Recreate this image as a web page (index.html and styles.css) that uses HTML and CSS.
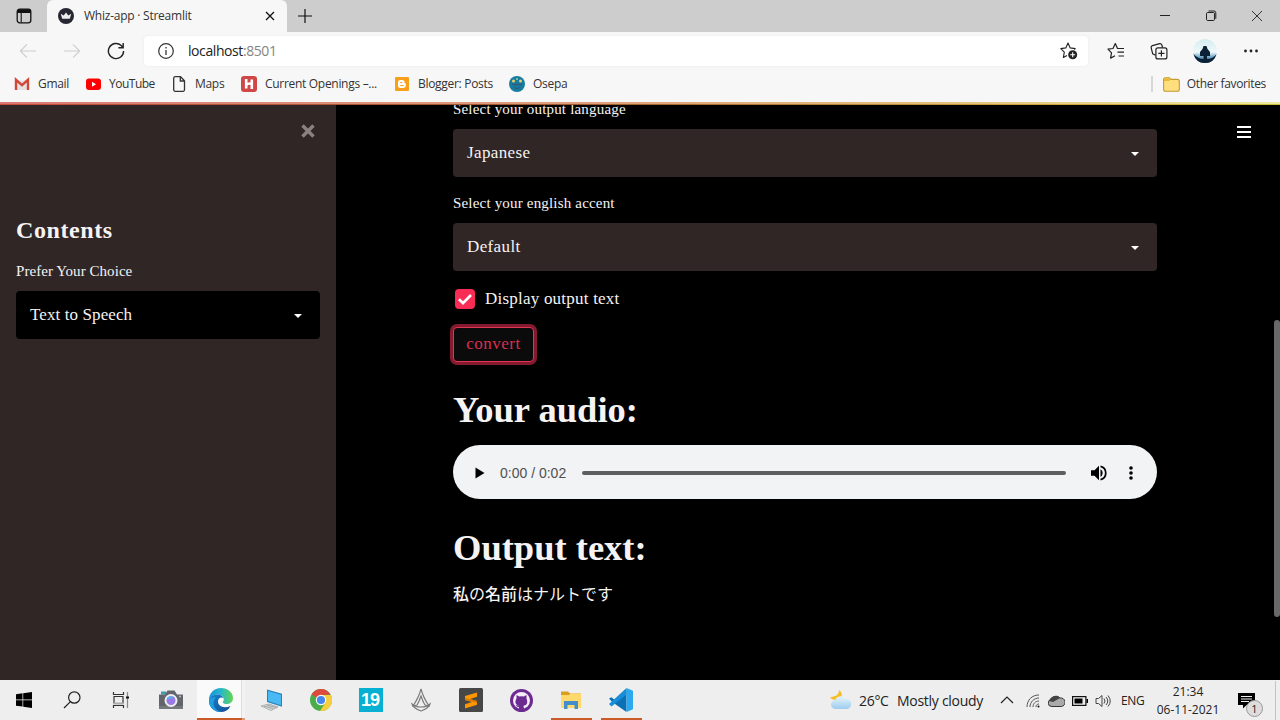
FILE: index.html
```html
<!DOCTYPE html>
<html lang="en">
<head>
<meta charset="utf-8">
<title>Whiz-app · Streamlit</title>
<link rel="stylesheet" href="styles.css">
</head>
<body>
<div class="window">
  <header class="titlebar">
    <div class="tab-actions"><svg width="16" height="16" viewBox="0 0 16 16"><rect x="1.200" y="1.200" width="13.600" height="13.600" rx="2.500" fill="none" stroke="#111" stroke-width="1.300"/><path d="M1.200 5V3.500a2.300 2.300 0 0 1 2.300-2.300h9a2.300 2.300 0 0 1 2.300 2.300V5z" fill="#111"/><path d="M5.200 5v9.500" stroke="#111" stroke-width="1.100"/></svg></div>
    <div class="tab">
      <svg width="16" height="16" viewBox="0 0 16 16"><circle cx="8" cy="8" r="8" fill="#262730"/><path d="M2.800 5.700 5.700 7.400 8 4.500l2.300 2.900 2.900-1.700-1.400 5.100H4.200z" fill="#eee"/></svg>
      <span class="tab-title">Whiz-app · Streamlit</span>
      <svg width="10" height="10" viewBox="0 0 10 10"><path d="M1 1l8 8M9 1 1 9" stroke="#111" stroke-width="1.300"/></svg>
    </div>
    <div class="new-tab"><svg width="14" height="14" viewBox="0 0 14 14"><path d="M7 0v14M0 7h14" stroke="#111" stroke-width="1.200"/></svg></div>
    <div class="window-controls">
      <svg width="12" height="12" viewBox="0 0 12 12"><path d="M1 5.500h10" stroke="#222"/></svg>
      <svg width="12" height="12" viewBox="0 0 12 12" fill="none" stroke="#222"><rect x="1.500" y="2.500" width="8" height="8" rx="1.200"/><path d="M3.500 1H9a1.800 1.800 0 0 1 1.800 1.800v6"/></svg>
      <svg width="12" height="12" viewBox="0 0 12 12"><path d="M1 1l10 10M11 1 1 11" stroke="#333"/></svg>
    </div>
  </header>

  <div class="toolbar">
    <div class="nav">
      <svg width="18" height="16" viewBox="0 0 18 16" fill="none" stroke="#cdcdcd" stroke-width="1.100"><path d="M17 8H1.500M8 1.300 1.300 8 8 14.700"/></svg>
      <svg width="18" height="16" viewBox="0 0 18 16" fill="none" stroke="#cdcdcd" stroke-width="1.100"><path d="M1 8h15.500M10 1.300 16.700 8 10 14.700"/></svg>
      <svg width="18" height="18" viewBox="0 0 18 18" fill="none" stroke="#222" stroke-width="1.400"><path d="M16.600 9a7.600 7.600 0 1 1-2.400-5.500L16 5.500M16.200 1v4.800h-4.800"/></svg>
    </div>
    <div class="address">
      <svg width="16" height="16" viewBox="0 0 16 16"><circle cx="8" cy="8" r="7.300" fill="none" stroke="#333" stroke-width="1.200"/><path d="M8 7v5M8 4v1.500" stroke="#333" stroke-width="1.300"/></svg>
      <span class="url">localhost<span class="port">:8501</span></span>
      <svg width="18" height="18" viewBox="0 0 18 18"><path d="M7 13.600 3.400 15.400l.9-5.200L.8 6.600l5-.7L8 1l2.200 4.900 5 .7-1 1" fill="none" stroke="#222" stroke-width="1.100" stroke-linejoin="round"/><circle cx="12.700" cy="12.800" r="4.500" fill="#222"/><path d="M12.700 10.300v5M10.200 12.800h5" stroke="#fff" stroke-width="1.100"/></svg>
    </div>
    <div class="tools">
      <svg width="18" height="18" viewBox="0 0 18 18" fill="none" stroke="#222" stroke-width="1.200" stroke-linejoin="round"><path d="M12.500 6.500h-2L8.300 1.600 6 6.500l-5 .7 3.500 3.600-.9 5.300L8 13.700M11.500 6.500H17M10.500 10.200H17M11.500 14H17"/></svg>
      <svg width="18" height="18" viewBox="0 0 18 18" fill="none" stroke="#222" stroke-width="1.200"><path d="M12.500 5.500l-.6-2.500a1.800 1.800 0 0 0-2.200-1.300L2.500 3.600A1.800 1.800 0 0 0 1.200 5.800l1.500 6 2.800 1.500"/><rect x="5.900" y="5.900" width="11" height="11" rx="2"/><path d="M11.400 8.300v6.200M8.300 11.400h6.200"/></svg>
      <svg width="24" height="24" viewBox="0 0 24 24"><defs><linearGradient id="sky" x1="0" y1="0" x2="0" y2="1"><stop offset="0" stop-color="#d5edef"/><stop offset=".55" stop-color="#eef8fa"/><stop offset=".75" stop-color="#6fa6c4"/><stop offset="1" stop-color="#163b5c"/></linearGradient></defs><circle cx="12" cy="12" r="12" fill="url(#sky)"/><path d="M.5 15q4.500 5 10 5v-3H7v-4l2.500-3 1-3h3l1 3 2.500 3v4h-3v3q6 0 9.500-5Q21 24 12 24 3 24 .5 15z" fill="#0b2136"/></svg>
      <svg width="16" height="4" viewBox="0 0 16 4" fill="#222"><circle cx="3.500" cy="2" r="1.400"/><circle cx="9" cy="2" r="1.400"/><circle cx="14.500" cy="2" r="1.400"/></svg>
    </div>
  </div>

  <nav class="bookmarks">
    <div class="links">
      <a class="bookmark"><svg width="16" height="16" viewBox="0 0 16 16"><path d="M3 4.500h10V14H3z" fill="#e5e2e2"/><path d="M2 14V3.800l6 5.400 6-5.400V14" fill="none" stroke="#d14836" stroke-width="2.400"/></svg><span>Gmail</span></a>
      <a class="bookmark"><svg width="16" height="16" viewBox="0 0 16 16"><rect x="1" y="2.500" width="15" height="11.500" rx="3" fill="#f00"/><path d="M7 5.700v5l4-2.500z" fill="#fff"/></svg><span class="tight">YouTube</span></a>
      <a class="bookmark"><svg width="16" height="16" viewBox="0 0 16 16" fill="none" stroke="#333" stroke-width="1.300"><path d="M2.700 2.200a1.500 1.500 0 0 1 1.300-1.500h5.500l4 4v9.100a1.500 1.500 0 0 1-1.500 1.500H4.200a1.500 1.500 0 0 1-1.500-1.500zM9.300.8V5h4.200"/></svg><span>Maps</span></a>
      <a class="bookmark"><svg width="16" height="16" viewBox="0 0 16 16"><rect width="16" height="16" rx="3" fill="#cf4747"/><path d="M5.200 3v9.500M10.800 3.500V13M5 9.500q2-3 6-1.500" stroke="#fff" stroke-width="2.600" fill="none"/></svg><span>Current Openings –...</span></a>
      <a class="bookmark"><svg width="16" height="16" viewBox="0 0 16 16"><rect x="1" y="1" width="14" height="14" rx="1" fill="#f9a01b"/><path d="M4 6.500A2.500 2.500 0 0 1 6.500 4H8a2.400 2.400 0 0 1 2.500 2.500q0 1 1.300 1V9.500A2.500 2.500 0 0 1 9.500 12h-3A2.500 2.500 0 0 1 4 9.500z" fill="#fff"/><path d="M6.200 6.500h2M6.200 9.500h3.400" stroke="#f9a01b" stroke-width="1.200"/></svg><span>Blogger: Posts</span></a>
      <a class="bookmark"><svg width="16" height="16" viewBox="0 0 16 16"><circle cx="8" cy="8" r="8" fill="#177da0"/><circle cx="4.500" cy="5" r="1.500" fill="#e9cd69"/><circle cx="11.500" cy="5" r="1.500" fill="#e9cd69"/><circle cx="8" cy="3" r="1" fill="#9ccfa5"/><path d="M3 8.500h10M5 11.500q3 2 6 0" fill="none" stroke="#315a7c" stroke-width="1.400"/></svg><span>Osepa</span></a>
    </div>
    <div class="other"><svg width="17" height="15" viewBox="0 0 17 15"><path d="M.6 3A2 2 0 0 1 2.500.7h3.800L8 2.400h6.300a2 2 0 0 1 2 2v7.900a2 2 0 0 1-2 2H2.600a2 2 0 0 1-2-2z" fill="#ffdf7d" stroke="#c39a35" stroke-width="1.100"/><path d="M1 4V3q0-1.800 1.500-1.800h3.700l1.300 1.500L6 4z" fill="#eab92f"/></svg><span>Other favorites</span></div>
  </nav>
  <div class="rainbow"></div>

  <div class="page">
    <aside class="sidebar">
      <div class="sidebar-close"><svg width="14" height="14" viewBox="0 0 14 14"><path d="M1.500 1.500l11 11M12.500 1.500l-11 11" stroke="#8a8181" stroke-width="3.400"/></svg></div>
      <h2>Contents</h2>
      <div class="label choice">Prefer Your Choice</div>
      <div class="select dark"><span>Text to Speech</span><i class="caret"></i></div>
    </aside>
    <main>
      <div class="content">
        <div class="label">Select your output language</div>
        <div class="select wide"><span>Japanese</span><i class="caret"></i></div>
        <div class="label second">Select your english accent</div>
        <div class="select wide"><span>Default</span><i class="caret"></i></div>
        <div class="check"><span class="box"><svg width="16" height="14" viewBox="0 0 16 14"><path d="M2 7.200l4 4L14 3" fill="none" stroke="#fff" stroke-width="2.700"/></svg></span><span>Display output text</span></div>
        <button class="convert">convert</button>
        <h1>Your audio:</h1>
        <div class="audio">
          <svg width="10" height="12" viewBox="0 0 10 12"><path d="M.5.500 9.500 6 .5 11.500z"/></svg>
          <span class="time">0:00 / 0:02</span>
          <span class="track"></span>
          <svg width="16" height="16" viewBox="0 0 16 16"><path d="M0 5.300h3.500L8 .8v14.400l-4.500-4.500H0z"/><path d="M9.500 4.300a4.300 4.300 0 0 1 0 7.400z"/><path d="M9.500 1.300a6.900 6.900 0 0 1 0 13.400" fill="none" stroke="#000" stroke-width="1.700"/></svg>
          <svg class="kebab" width="4" height="14" viewBox="0 0 4 14"><circle cx="2" cy="2" r="1.800"/><circle cx="2" cy="7" r="1.800"/><circle cx="2" cy="12" r="1.800"/></svg>
        </div>
        <h1 class="second-h">Output text:</h1>
        <p lang="ja"><b>私</b>の<b>名前</b>はナルトです</p>
      </div>
      <div class="menu"><span></span><span></span><span></span></div>
      <div class="scrollbar"></div>
    </main>
  </div>

  <footer class="taskbar">
    <div class="system">
      <svg width="16" height="16" viewBox="0 0 16 16"><path d="M0 2.200 6.500 1.300v6.300H0zM7.200 1.200 16 0v7.600H7.200zM0 8.300h6.500v6.300L0 13.700zM7.200 8.300H16V16l-8.800-1.200z"/></svg>
      <svg width="18" height="18" viewBox="0 0 18 18" fill="none" stroke="#222" stroke-width="1.200"><circle cx="11.300" cy="6.500" r="5.700"/><path d="M7.200 10.800 1 17"/></svg>
      <svg width="18" height="18" viewBox="0 0 18 18" fill="none" stroke="#333" stroke-width="1.200"><path d="M1.500 1v2.500h10V1M1.500 17v-2.500h10V17"/><path d="M2 5.500v7M11 5.500v7M1.500 5.500h10"/><path d="M1.500 12.500h10" stroke="#aaa" stroke-width="2"/><path d="M15.500 1v16" stroke="#888"/><path d="M14 6.500h3" stroke="#111" stroke-width="2"/></svg>
    </div>
    <div class="apps">
      <div class="app"><svg width="24" height="24" viewBox="0 0 24 24"><path d="M2 3.500h5v3H2z" fill="#3d9db5"/><path d="M0 6.500h6l2.500-4h7l2.500 4h6V21H0z" fill="#62666c"/><path d="M0 18h24v3H0z" fill="#75797d"/><circle cx="12" cy="12.500" r="6.500" fill="#eee"/><circle cx="12" cy="12.500" r="4.500" fill="#9a78e5"/><path d="M8 11.500a4.200 4.200 0 0 1 7-2z" fill="#56b6ed"/><circle cx="21" cy="8.500" r="1" fill="#bbb"/></svg></div>
      <div class="app active"><svg width="24" height="24" viewBox="0 0 24 24"><defs><linearGradient id="edgeTop"><stop offset="0" stop-color="#1693d8"/><stop offset=".5" stop-color="#27b7ca"/><stop offset="1" stop-color="#65d64f"/></linearGradient><linearGradient id="edgeLow" x1="0" y1="0" x2="1" y2="1"><stop offset="0" stop-color="#1684cf"/><stop offset="1" stop-color="#164c92"/></linearGradient></defs><path d="M0 12C0 5 5 0 12 0s12 4.500 12 10c0 4-3 6-6.500 6-2.500 0-4.500-1-3.200-2.700C16 11 13.500 6.500 9 6.500 4 6.500 1 9 0 12z" fill="url(#edgeTop)"/><path d="M0 13c0-4 4-6.500 8.500-6.500 3.500 0 5.500 2 5.500 3.500-2-1.500-5 0-5 3.500 0 4.500 5.500 7.500 12.500 4.500C19.500 22 16 24 12 24 5 24 0 19 0 13z" fill="url(#edgeLow)"/><path d="M7 9c-5 5-2 13 5 15C5 24 0 19 0 13c0-2 3-4 7-4z" fill="#1d9ede"/></svg></div>
      <div class="app"><svg width="24" height="24" viewBox="0 0 24 24"><path d="M8 1.500l15 4.300v13L8 14z" fill="#2384bd"/><path d="M9 3l13 3.800v10.500L9 13z" fill="#48b9f3"/><path d="M2 18l8-2 9 3-7 3.500z" fill="#d9dddf" stroke="#999" stroke-width=".7"/><path d="M5 18l9 2.500M8 17l9 2.500" stroke="#888" stroke-width=".7"/></svg></div>
      <div class="app"><svg width="22" height="22" viewBox="0 0 22 22"><circle cx="11" cy="11" r="11" fill="#4aae48"/><path d="M11 11 1.500 5.500A11 11 0 0 1 20.500 5.500L11 6z" fill="#de4b3e"/><path d="M11 6h9.800A11 11 0 0 1 10 22l5.500-8.500z" fill="#f6ce3e"/><circle cx="11" cy="11" r="5.200" fill="#fff"/><circle cx="11" cy="11" r="4.100" fill="#4688ed"/></svg></div>
      <div class="app"><span class="nineteen">19</span></div>
      <div class="app"><svg width="20" height="24" viewBox="0 0 20 24" fill="none" stroke="#777" stroke-width="1.100"><path d="M10 1C8.500 7 6 12 2 18l4-1c2-3 3-6 4-9 1 3 2 6 4 9l4 1C14 12 11.500 7 10 1zM1 16c1 3.500 5 5.500 9 7 4-1.500 8-3.500 9-7-4 4-14 4-18 0z"/></svg></div>
      <div class="app"><svg width="24" height="24" viewBox="0 0 24 24"><rect width="24" height="24" rx="1.500" fill="#474747"/><path d="M18 4.500v4.300l-7 2.200 7 2v3.800L6 20.500v-4.300l7-2.300-7-2V8z" fill="#ff9800"/><path d="M6 11.900v-1.700l5 .8 7 2v1.700z" fill="#d87900"/></svg></div>
      <div class="app"><svg width="23" height="23" viewBox="0 0 23 23"><circle cx="11.500" cy="11.500" r="11.500" fill="#6c2b91"/><circle cx="11.500" cy="11.500" r="8.500" fill="#f5edf8"/><path d="M6.500 6l2.700 1.500q2.300-.6 4.600 0L16.500 6v3.500c2 5-.5 7-3 7.300l.5 3.200H9v-2c-2.500.5-2.500-1.500-3.500-2 1.500-.6 2 1.300 3.500.8-3.500-.8-4.500-3.800-2.500-7.300z" fill="#6c2b91"/></svg></div>
      <div class="app open"><svg width="22" height="20" viewBox="0 0 22 20"><path d="M1 1.500h7l2 2h11V9H1z" fill="#d99e21"/><path d="M1 5h8l2-1.500h10V18H1z" fill="#ffd96c"/><path d="M4 19v-8h14v8h-3.500v-4h-7v4z" fill="#438dcd"/></svg></div>
      <div class="app open"><svg width="24" height="24" viewBox="0 0 24 24"><path d="M17.500 1 5.800 11.900 2.500 9.300 0 10.500 3.200 14l14.300 10z" fill="#0b70b6"/><path d="M17.500 6.500 2.500 18.500 0 16l17.500-16z" fill="#168dd6"/><path d="M17.500 0 24 2.700v18.600L17.500 24z" fill="#2ba8ee"/></svg></div>
    </div>
    <div class="tray">
      <svg class="weather" width="24" height="20" viewBox="0 0 24 20"><defs><linearGradient id="cloud" x1="0" y1="0" x2="0" y2="1"><stop stop-color="#e6f4fc"/><stop offset="1" stop-color="#9ccced"/></linearGradient></defs><path d="M10 0c5 3 3 11-3 10-3 0-5-1-6-3 5 0 9-2 9-7z" fill="#f5bd28"/><path d="M7 19a4.500 4.500 0 0 1-1-9 6 6 0 0 1 10.500-1A5 5 0 1 1 18 19z" fill="url(#cloud)"/></svg>
      <span class="temp">26°C</span><span class="cloudy">Mostly cloudy</span>
      <svg class="chevron" width="14" height="8" viewBox="0 0 14 8"><path d="M1 7l6-6 6 6" fill="none" stroke="#222" stroke-width="1.200"/></svg>
      <div class="status">
        <svg width="15" height="14" viewBox="0 0 15 14" fill="none" stroke="#555"><path d="M1 13C1 6 6 1 13 1M4 13c0-5 4-9 9-9M7 13c0-3.500 2.500-6 6-6M10 13c0-2 1-3 3-3"/><circle cx="12.500" cy="12.500" r="1" fill="#111" stroke="none"/></svg>
        <svg width="17" height="12" viewBox="0 0 17 12"><path d="M4 11.500a3.500 3.500 0 0 1-.5-7A5 5 0 0 1 12 3a4.200 4.200 0 0 1 1.500 8.500z" fill="#aaa" stroke="#333"/><path d="M1 6c2-5 7-6.500 11-3L5 7z" fill="#444"/></svg>
        <svg width="16" height="10" viewBox="0 0 16 10"><rect x=".6" y=".6" width="13.300" height="8.800" fill="none" stroke="#111" stroke-width="1.200"/><path d="M2.500 2.500h8v5h-8zM14.500 3H16v4h-1.500z"/></svg>
        <svg width="16" height="14" viewBox="0 0 16 14" fill="none" stroke="#444"><path d="M1 4.500h2.500L7 1.500v11l-3.500-3H1zM9 4.500q2 2.500 0 5M11 3q3.500 4 0 8M13 1.500q4.500 5.500 0 11"/></svg>
      </div>
      <span class="lang">ENG</span>
      <div class="clock"><span>21:34</span><span>06-11-2021</span></div>
      <div class="notice"><svg width="17" height="16" viewBox="0 0 17 16"><path d="M0 0h17v12H8.500L5 15.500V12H0z"/><path d="M3 3.500h11M3 6h11M3 8.500h8" stroke="#eee"/></svg><span class="badge">1</span></div>
      <div class="show-desktop"></div>
    </div>
  </footer>
</div>
</body>
</html>
```
FILE: styles.css
```css
* { box-sizing: border-box; }
body { margin: 0; overflow: hidden; background: #000; }
svg { display: block; flex: none; }
.window { width: 1280px; height: 720px; display: flex; flex-direction: column; font-family: "Open Sans", "Noto Sans", sans-serif; font-size: 12px; color: #333; white-space: nowrap; }

.titlebar { height: 32px; flex: none; display: flex; background: #cdcdcd; }
.tab-actions { width: 47px; display: flex; align-items: center; padding-left: 16px; }
.tab { width: 240px; display: flex; align-items: center; padding: 0 12px 0 11px; background: #f7f7f7; border-radius: 6px 6px 0 0; }
.tab-title { flex: 1; margin: -2px 0 0 10px; font-size: 12px; letter-spacing: -.24px; }
.new-tab { display: flex; align-items: center; padding-left: 11px; }
.window-controls { margin-left: auto; display: flex; align-items: center; gap: 34px; padding-right: 17px; }

.toolbar { height: 38px; flex: none; display: flex; align-items: center; background: #f7f7f7; padding-left: 19px; }
.nav { width: 125px; display: flex; align-items: center; gap: 26px; }
.address { width: 944px; height: 30px; display: flex; align-items: center; padding: 0 10px 0 14px; background: #fff; border-radius: 4px; box-shadow: 0 0 2px #e3e3e3; }
.url { flex: 1; margin: -2px 0 0 14px; font-size: 14px; letter-spacing: -.42px; color: #222; }
.port { color: #858585; }
.tools { margin-left: 19px; display: flex; align-items: center; gap: 25px; }

.bookmarks { height: 32px; flex: none; display: flex; align-items: center; justify-content: space-between; background: #f7f7f7; padding: 0 14px 4px; }
.links { display: grid; grid-template-columns: 71px 86px 70px 153px 115px 60px; }
.bookmark, .other { display: flex; align-items: center; gap: 8px; letter-spacing: -.3px; }
.bookmark span, .other span { margin-top: -1px; }
.bookmark .tight { letter-spacing: -.5px; }
.other { border-left: 2px solid #d7d7d7; padding-left: 10px; height: 16px; gap: 7px; letter-spacing: -.34px; }
.rainbow { height: 3px; flex: none; background: linear-gradient(90deg, #d97973, #de9f7c 45%, #e3bd7b 72%, #eee9a0); position: relative; }
.rainbow::after { content: ""; position: absolute; left: 0; right: 0; bottom: 0; height: 1px; background: linear-gradient(90deg, #c64c3e, #9c5a30 45%, #c9a13a 80%, #c9bd3a); }

.page { height: 575px; flex: none; display: flex; font-family: "Liberation Serif", serif; font-size: 16px; color: #f5f3f3; overflow: hidden; }
.sidebar { width: 336px; background: #312626; padding: 19px 16px; }
.sidebar-close { height: 14px; display: flex; justify-content: flex-end; padding-right: 5px; }
h1, h2, p { margin: 0; }
h2 { margin-top: 77px; font-size: 24px; line-height: 30px; letter-spacing: .6px; }
.label { height: 22px; line-height: 22px; margin-bottom: 9px; font-size: 15px; letter-spacing: .18px; }
.choice { margin: 15px 0 9px; letter-spacing: .05px; }
.select { height: 48px; display: flex; align-items: center; justify-content: space-between; padding: 0 18px 1px 14px; border-radius: 4px; background: #312626; font-size: 17px; letter-spacing: .1px; }
.wide { letter-spacing: .38px; }
.dark { background: #000; }
.caret { border: 4px solid transparent; border-top-color: #fff; border-bottom: 0; margin-top: 2px; }

main { position: relative; width: 944px; background: #000; }
.content { width: 704px; margin: -7px 0 0 117px; }
.second { margin-top: 15px; }
.check { display: flex; align-items: center; height: 20px; margin-top: 18px; font-size: 17px; letter-spacing: .22px; }
.box { width: 20px; height: 20px; margin: 0 10px 0 2px; border-radius: 4px; background: #f82c55; display: flex; align-items: center; justify-content: center; }
.convert { display: block; width: 81px; height: 35px; margin-top: 18px; padding: 0 0 2px; border: 1px solid #e03554; border-radius: 4px; box-shadow: 0 0 0 3px #831a2e; background: #0b0b0b; color: #d7304f; font: 17px "Liberation Serif", serif; letter-spacing: .5px; }
h1 { height: 48px; line-height: 48px; margin: 24px 0 11px; font-size: 36.5px; }
.second-h { margin: 25px 0 9px; }
.audio { height: 54px; border-radius: 27px; background: #f1f3f4; display: flex; align-items: center; padding: 1px 24px 0 22px; }
.time { margin-left: 15px; width: 66px; font: 14px "Liberation Sans", sans-serif; color: #505050; }
.track { flex: 1; height: 4px; margin: 0 25px 0 16px; border-radius: 2px; background: #5d5f60; }
.kebab { margin-left: 22px; }
p { line-height: 24px; font-family: "Noto Sans CJK JP", sans-serif; font-size: 16px; font-weight: 400; }
p b { font-weight: 500; }
.menu { position: absolute; left: 901px; top: 21px; display: grid; gap: 3px; }
.menu span { width: 14px; height: 2px; background: #fff; }
.scrollbar { position: absolute; right: 0; top: 215px; width: 6px; height: 297px; border-radius: 3px; background: #696969; }

.taskbar { height: 40px; flex: none; display: flex; background: #eee; color: #222; }
.system, .apps { display: flex; }
.system { width: 146px; align-items: center; padding-left: 16px; gap: 31px; }
.app { position: relative; width: 50px; height: 40px; display: flex; align-items: center; justify-content: center; }
.active { background: linear-gradient(90deg, transparent 1px, #fafafa 1px 45px, #ddd 45px 46px, #f3f3f3 46px 49px, transparent 49px); }
.active::after, .open::after { content: ""; position: absolute; left: 5px; right: 4px; bottom: 0; height: 2px; background: #ca5b29; }
.active::after { left: 1px; right: 1px; background: linear-gradient(90deg, #ca5b29 45px, #e09a78 45px); }
.nineteen { width: 24px; height: 24px; background: #05b0d3; color: #fff; font: bold 18px/24px "Liberation Sans", sans-serif; letter-spacing: -1px; padding-left: 2px; }
.tray { width: 451px; margin-left: auto; display: flex; align-items: center; padding-top: 1px; }
.weather { margin: -2px 6px 0 0; }
.temp { width: 38px; font-size: 14px; letter-spacing: -.3px; }
.cloudy { width: 101px; font-size: 14px; letter-spacing: -.28px; }
.chevron { margin: -2px 12px 0 2px; }
.status { display: flex; align-items: center; gap: 7px; }
.lang { width: 24px; margin-left: 10px; letter-spacing: -.4px; }
.clock { width: 68px; margin-left: 9px; display: flex; flex-direction: column; align-items: center; line-height: 18px; }
.notice { position: relative; margin-left: 16px; }
.badge { position: absolute; left: 8px; top: 7px; width: 17px; height: 17px; border: 1px solid #999; border-radius: 50%; background: #ddd; font-size: 11px; line-height: 15px; text-align: center; }
.show-desktop { margin-left: auto; width: 5px; height: 39px; border-left: 1px solid #c4c4c4; }
```
